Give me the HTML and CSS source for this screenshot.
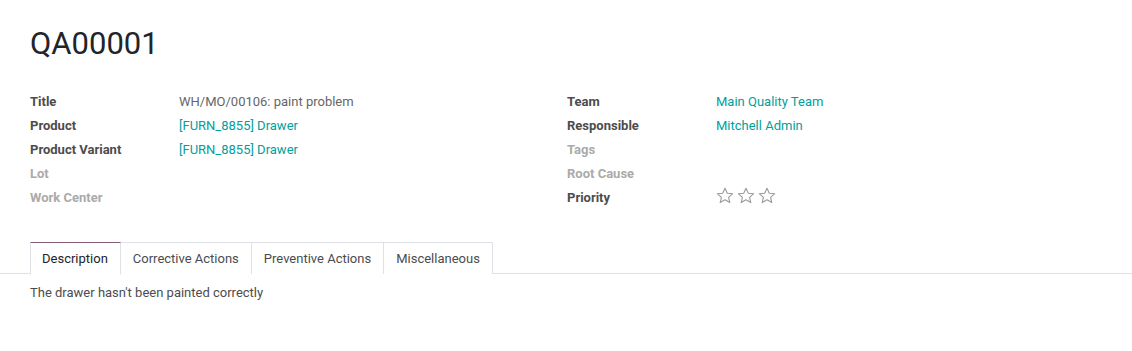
FILE: index.html
```html
<!DOCTYPE html>
<html>
<head>
<meta charset="utf-8">
<link rel="stylesheet" href="styles.css">
</head>
<body>
<div class="sheet">
  <h1 class="title">QA00001</h1>
  <div class="groups">
    <div class="group">
      <div class="row"><span class="label">Title</span><span class="value">WH/MO/00106: paint problem</span></div>
      <div class="row"><span class="label">Product</span><a class="value link">[FURN_8855] Drawer</a></div>
      <div class="row"><span class="label">Product Variant</span><a class="value link">[FURN_8855] Drawer</a></div>
      <div class="row"><span class="label muted">Lot</span><span class="value"></span></div>
      <div class="row"><span class="label muted">Work Center</span><span class="value"></span></div>
    </div>
    <div class="group">
      <div class="row"><span class="label">Team</span><a class="value link">Main Quality Team</a></div>
      <div class="row"><span class="label">Responsible</span><a class="value link">Mitchell Admin</a></div>
      <div class="row"><span class="label muted">Tags</span><span class="value"></span></div>
      <div class="row"><span class="label muted">Root Cause</span><span class="value"></span></div>
      <div class="row"><span class="label">Priority</span>
        <span class="value stars">
          <svg width="18" height="17" viewBox="0 0 18 17"><path d="M9 1.2l2.3 5 5.4.5-4.1 3.6 1.2 5.3L9 12.8l-4.8 2.8 1.2-5.3L1.3 6.7l5.4-.5z" fill="none" stroke="#9a9a9a" stroke-width="1.1" stroke-linejoin="round"/></svg>
          <svg width="18" height="17" viewBox="0 0 18 17"><path d="M9 1.2l2.3 5 5.4.5-4.1 3.6 1.2 5.3L9 12.8l-4.8 2.8 1.2-5.3L1.3 6.7l5.4-.5z" fill="none" stroke="#9a9a9a" stroke-width="1.1" stroke-linejoin="round"/></svg>
          <svg width="18" height="17" viewBox="0 0 18 17"><path d="M9 1.2l2.3 5 5.4.5-4.1 3.6 1.2 5.3L9 12.8l-4.8 2.8 1.2-5.3L1.3 6.7l5.4-.5z" fill="none" stroke="#9a9a9a" stroke-width="1.1" stroke-linejoin="round"/></svg>
        </span>
      </div>
    </div>
  </div>
  <div class="tabs">
    <div class="tab active">Description</div>
    <div class="tab">Corrective Actions</div>
    <div class="tab">Preventive Actions</div>
    <div class="tab">Miscellaneous</div>
  </div>
  <div class="pane">The drawer hasn't been painted correctly</div>
</div>
</body>
</html>
```

FILE: styles.css
```css
* { box-sizing: border-box; }
html, body { margin: 0; padding: 0; background: #fff; }
body {
  font-family: Roboto, "Noto Sans", sans-serif;
  font-size: 13px;
  color: #4c4c4c;
  width: 1132px;
  height: 351px;
  overflow: hidden;
}
.sheet { padding-top: 24px; }
.title {
  margin: 0 0 0 30px;
  font-weight: 400;
  font-size: 31px;
  line-height: 40px;
  color: #212529;
}
.groups {
  display: grid;
  grid-template-columns: 537px 1fr;
  padding-left: 30px;
  margin-top: 25px;
}
.row {
  display: flex;
  height: 24px;
  align-items: center;
}
.label {
  width: 149px;
  font-weight: 700;
  color: #4c4c4c;
}
.label.muted { color: #aaaaaa; }
.value { color: #666666; }
.link { color: #00a09d; text-decoration: none; }
.stars { display: flex; gap: 3px; margin-left: 0; margin-top: -4px; }
.stars svg { display: block; }
.tabs {
  display: flex;
  margin-top: 33px;
  padding-left: 30px;
  border-bottom: 1px solid #dee2e6;
  height: 32px;
}
.tab {
  height: 32px;
  padding: 0 12px;
  line-height: 31px;
  border: 1px solid #dee2e6;
  border-left: none;
  border-bottom: none;
  color: #4c4c4c;
  margin-bottom: -1px;
  background: #fff;
}
.tab.active {
  padding-left: 11px;
  border-left: 1px solid #dee2e6;
  border-top: 1px solid #875a7b;
  color: #212529;
  height: 33px;
  border-bottom: 1px solid #fff;
}
.pane {
  padding: 10px 30px;
  line-height: 18px;
}
```
